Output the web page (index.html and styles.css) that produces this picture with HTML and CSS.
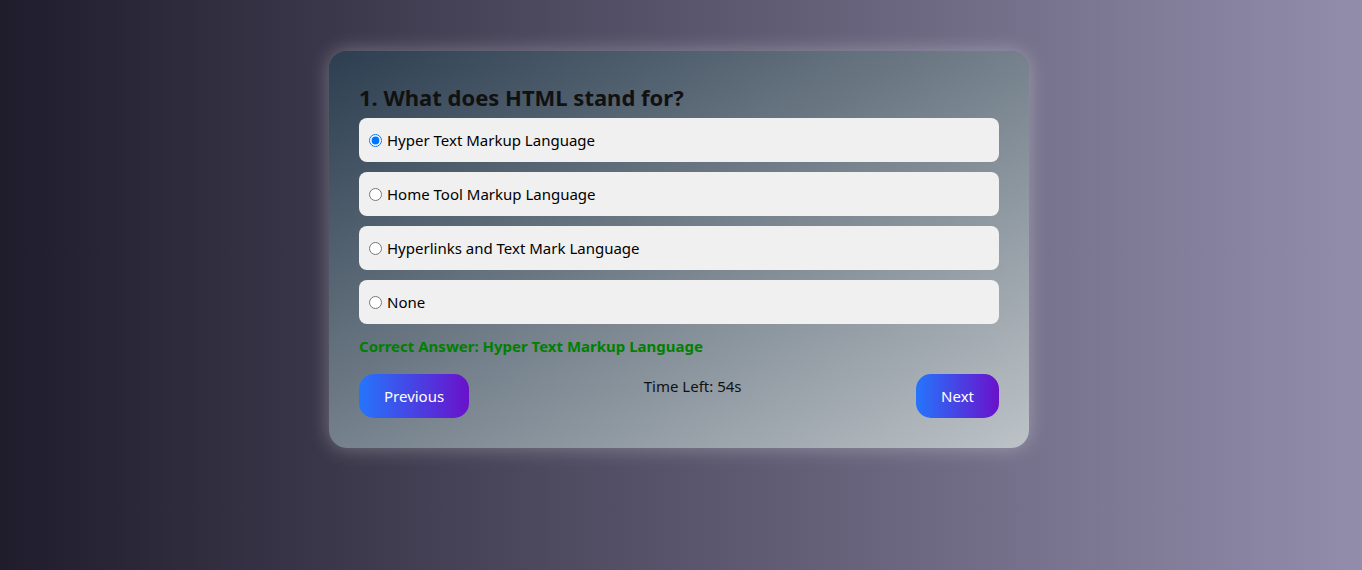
FILE: index.html
```html
<!DOCTYPE html>
<html lang="en">
<head>
<meta charset="UTF-8">
<title>Quiz</title>
<link rel="stylesheet" href="styles.css">
</head>
<body>
<main class="quiz-card">
  <h2 class="question">1. What does HTML stand for?</h2>
  <div class="options">
    <label class="option"><input type="radio" name="q1" checked><span>Hyper Text Markup Language</span></label>
    <label class="option"><input type="radio" name="q1"><span>Home Tool Markup Language</span></label>
    <label class="option"><input type="radio" name="q1"><span>Hyperlinks and Text Mark Language</span></label>
    <label class="option"><input type="radio" name="q1"><span>None</span></label>
  </div>
  <p class="feedback">Correct Answer: Hyper Text Markup Language</p>
  <div class="controls">
    <button class="btn">Previous</button>
    <div class="timer">Time Left: 54s</div>
    <button class="btn">Next</button>
  </div>
</main>
</body>
</html>
```
FILE: styles.css
```css
html, body {
  margin: 0;
  height: 100%;
}
body {
  background: linear-gradient(to right, #1f1c2c, #928dab);
  font-family: "Noto Sans", "Open Sans", sans-serif;
  display: flex;
  justify-content: center;
  align-items: flex-start;
  padding: 51px 4px 0 0;
  box-sizing: border-box;
}
.quiz-card {
  width: 700px;
  box-sizing: border-box;
  padding: 30px;
  border-radius: 18px;
  background: linear-gradient(to bottom right, #2c3e50, #bdc3c7);
  box-shadow: 0 0 20px rgba(255, 255, 255, 0.3);
}
.question {
  margin: 0 0 5px;
  font-size: 22px;
  line-height: 32px;
  font-weight: 700;
  color: #111;
}
.options {
  display: flex;
  flex-direction: column;
  gap: 10px;
}
.option {
  display: flex;
  align-items: center;
  background: #f0f0f0;
  border-radius: 8px;
  padding: 10px;
  height: 44px;
  box-sizing: border-box;
  font-size: 15px;
  color: #000;
}
.option input {
  margin: 0 5px 0 0;
  width: 13px;
  height: 13px;
}
.feedback {
  margin: 10px 0 16px;
  font-size: 15px;
  line-height: 24px;
  font-weight: 700;
  color: #008000;
}
.controls {
  display: flex;
  justify-content: space-between;
}
.timer {
  font-size: 15px;
  line-height: 24px;
  color: #111;
}
.btn {
  border: none;
  border-radius: 15px;
  padding: 12px 25px;
  font-family: inherit;
  font-size: 15px;
  line-height: 20px;
  color: #fff;
  background: linear-gradient(to right, #2575fc, #6a11cb);
}
```
